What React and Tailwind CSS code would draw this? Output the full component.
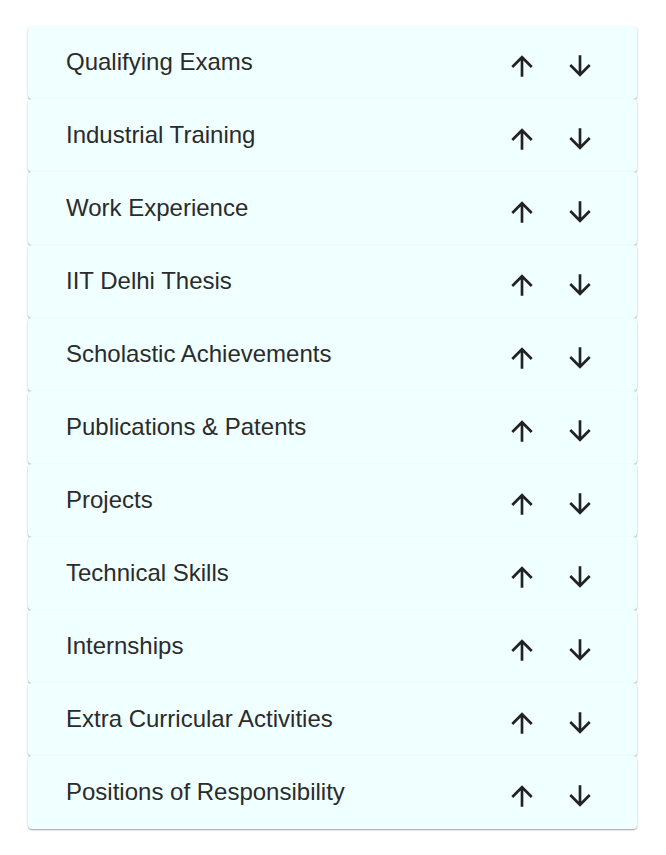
import React from 'react';

const sections = [
  'Qualifying Exams',
  'Industrial Training',
  'Work Experience',
  'IIT Delhi Thesis',
  'Scholastic Achievements',
  'Publications & Patents',
  'Projects',
  'Technical Skills',
  'Internships',
  'Extra Curricular Activities',
  'Positions of Responsibility',
];

const ArrowUp = () => (
  <svg viewBox="0 0 24 24" className="w-[32px] h-[32px] fill-[#222222]">
    <path d="M4 12l1.41 1.41L11 7.83V20h2V7.83l5.58 5.59L20 12l-8-8-8 8z" />
  </svg>
);

const ArrowDown = () => (
  <svg viewBox="0 0 24 24" className="w-[32px] h-[32px] fill-[#222222]">
    <path d="M20 12l-1.41-1.41L13 16.17V4h-2v12.17l-5.58-5.59L4 12l8 8 8-8z" />
  </svg>
);

const App = () => {
  return (
    <div className="w-[666px] min-h-[855px] bg-white pt-[26px] pl-[28px] font-['Liberation_Sans',Arial,sans-serif]">
      <div className="w-[609px] flex flex-col">
        {sections.map((name) => (
          <div
            key={name}
            className="h-[73px] flex items-center bg-[#f0ffff] rounded-[4px] shadow-[0_1px_2px_0_rgba(0,0,0,0.3),0_1px_1px_0_rgba(0,0,0,0.1)] pl-[38px] pr-[41px]"
          >
            <span className="flex-1 text-[24px] text-[#2b2b2b] leading-none -mt-[2px]">{name}</span>
            <div className="flex items-center gap-[26px] mt-[7px]">
              <button className="flex items-center justify-center">
                <ArrowUp />
              </button>
              <button className="flex items-center justify-center">
                <ArrowDown />
              </button>
            </div>
          </div>
        ))}
      </div>
    </div>
  );
};

export default App;
